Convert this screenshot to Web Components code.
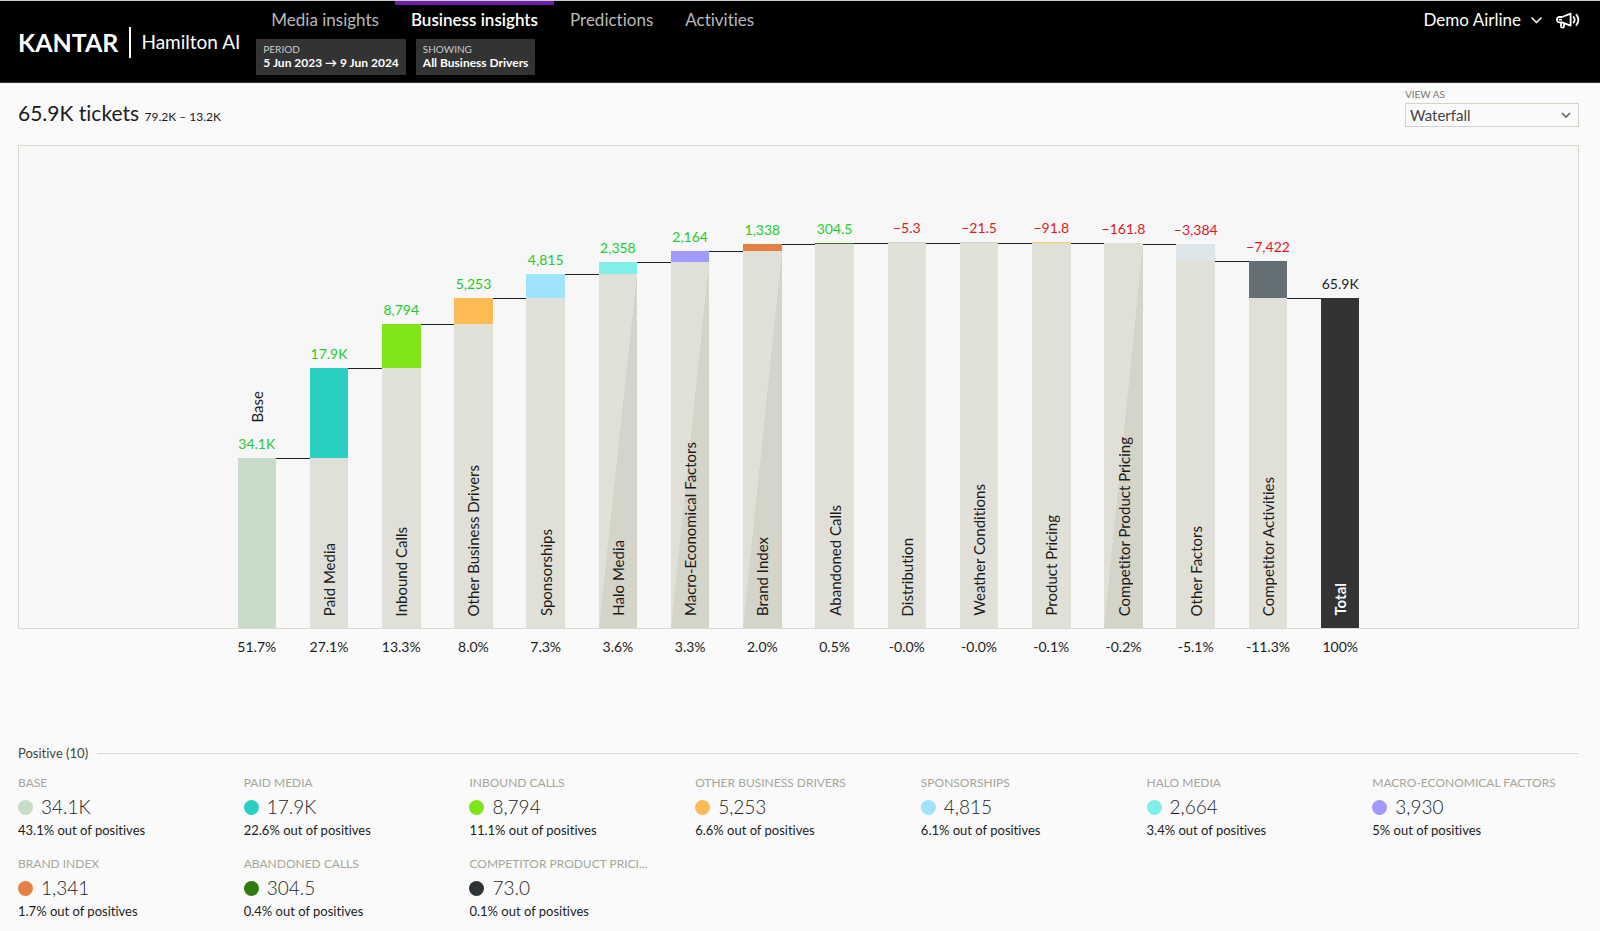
<!DOCTYPE html>
<html lang="en">
<head>
<meta charset="utf-8">
<meta name="viewport" content="width=device-width, initial-scale=1">
<title>Hamilton AI - Business insights</title>
<style>
    body {
        margin: 0;
        background: #fafafa;
        color: #1c1c1c;
        font-family: Lato, "Open Sans", sans-serif;
        font-size: 14px;
        font-variant-ligatures: none;
    }

    main {
        padding: 5px 21px 12px 18px;
    }
</style>
</head>
<body>

<app-header>
    <nav-tab slot="tabs">Media insights</nav-tab>
    <nav-tab slot="tabs" active>Business insights</nav-tab>
    <nav-tab slot="tabs">Predictions</nav-tab>
    <nav-tab slot="tabs">Activities</nav-tab>
    <filter-chip slot="filters" label="PERIOD">5 Jun 2023 → 9 Jun 2024</filter-chip>
    <filter-chip slot="filters" label="SHOWING">All Business Drivers</filter-chip>
    <span slot="account">Demo Airline</span>
</app-header>

<main>
    <chart-toolbar>
        <span slot="title">65.9K tickets</span>
        <span slot="range">79.2K – 13.2K</span>
    </chart-toolbar>
    <waterfall-chart></waterfall-chart>
    <legend-group>Positive (10)</legend-group>
</main>

<template id="APP_HEADER">
    <style>
    :host {
        display: block;
        background: #000;
        color: #fff;
        border-top: 1px solid #c8cdd0;
        border-bottom: 1px solid #333;
    }

    header {
        display: flex;
        padding: 0 20px 7px 18px;
    }

    .brand {
        display: flex;
        align-items: center;
        align-self: center;
        padding-top: 8px;
        color: inherit;
        text-decoration: none;
    }

    .brand b {
        font-size: 25px;
        line-height: 32px;
        font-weight: 700;
    }

    .brand i {
        width: 2px;
        height: 31px;
        margin: 0 10px 0 11px;
        background: #fff;
    }

    .brand span {
        font-size: 19px;
        line-height: 24px;
    }

    .center {
        flex: 1;
        padding-left: 15px;
    }

    nav, .filters {
        display: flex;
    }

    .filters {
        gap: 10px;
        padding-left: 1px;
    }

    .account {
        display: flex;
        align-items: center;
        align-self: flex-start;
        gap: 13px;
        padding-top: 7px;
    }

    button {
        display: flex;
        align-items: center;
        gap: 9px;
        padding: 0;
        border: 0;
        background: none;
        color: inherit;
        font: inherit;
        font-size: 17px;
        line-height: 24px;
        cursor: pointer;
    }

    svg {
        display: block;
        fill: none;
        stroke: #fff;
    }
    </style>
    <header>
        <a class="brand" href="#"><b>KANTAR</b><i></i><span>Hamilton AI</span></a>
        <div class="center">
            <nav><slot name="tabs"></slot></nav>
            <div class="filters"><slot name="filters"></slot></div>
        </div>
        <div class="account">
            <button type="button">
                <slot name="account"></slot>
                <svg width="13" height="8" viewBox="0 0 13 8" stroke-width="1.5"><path d="M1.5 1.5l5 5 5-5"/></svg>
            </button>
            <button type="button" aria-label="Announcements">
                <svg width="24" height="17" viewBox="0 0 24 17" stroke-width="1.8" stroke-linejoin="round" stroke-linecap="round">
                    <path d="M6 5L14.6 1.600v12L6 10.400H3.400A2.400 2.400 0 0 1 1 8V7.400A2.400 2.400 0 0 1 3.400 5zM5 10.600v3.600a1.500 1.500 0 0 0 3 0v-2.800M3.600 7.700h1.600"/>
                    <path d="M17.600 5a4.600 4.600 0 0 1 0 5.600M20.400 2.600a8.600 8.600 0 0 1 0 10.400"/>
                </svg>
            </button>
        </div>
    </header>
</template>

<template id="NAV_TAB">
    <style>
    :host {
        display: block;
        font-size: 17px;
        line-height: 24px;
    }

    a {
        display: block;
        padding: 3px 16px 7px;
        border-top: 4px solid transparent;
        color: #b9b9b9;
        text-decoration: none;
    }

    :host([active]) a {
        border-color: #6d1fa8;
        color: #fff;
        font-weight: 600;
    }
    </style>
    <a href="#"><slot></slot></a>
</template>

<template id="FILTER_CHIP">
    <style>
    :host {
        display: block;
    }

    button {
        display: block;
        padding: 4px 7px;
        border: 0;
        background: #333;
        color: #fff;
        font: inherit;
        font-size: 12px;
        font-weight: 700;
        line-height: 16px;
        text-align: left;
        cursor: pointer;
    }

    small {
        display: block;
        color: #c9c9c9;
        font-size: 10px;
        font-weight: 400;
        line-height: 12px;
    }
    </style>
    <button type="button"><small></small><slot></slot></button>
</template>

<template id="CHART_TOOLBAR">
    <style>
    :host {
        display: flex;
        justify-content: space-between;
        align-items: flex-end;
        padding-bottom: 18px;
    }

    h1 {
        margin: 0;
        font-size: 21px;
        font-weight: 400;
        line-height: 20px;
    }

    small {
        font-size: 12px;
    }

    .view {
        display: grid;
        gap: 3px;
        width: 174px;
    }

    label {
        color: #77776f;
        font-size: 10px;
        line-height: 12px;
    }

    .field {
        display: grid;
        align-items: center;
    }

    select, svg {
        grid-area: 1 / 1;
    }

    select {
        appearance: none;
        height: 24px;
        padding: 0 4px;
        border: 1px solid #d3d3c6;
        border-radius: 0;
        background: #fafafa;
        color: #444;
        font: inherit;
        font-size: 15px;
    }

    svg {
        justify-self: end;
        margin-right: 8px;
        fill: none;
        stroke: #666;
        pointer-events: none;
    }
    </style>
    <h1><slot name="title"></slot> <small><slot name="range"></slot></small></h1>
    <div class="view">
        <label for="view">VIEW AS</label>
        <div class="field">
            <select id="view"><option>Waterfall</option></select>
            <svg width="10" height="7" viewBox="0 0 10 7" stroke-width="1.6"><path d="M1 1l4 4 4-4"/></svg>
        </div>
    </div>
</template>

<template id="WATERFALL_CHART">
    <style>
    :host {
        display: block;
    }

    .plot, .shares {
        display: grid;
        grid-template-columns: repeat(15, minmax(0, 8fr) minmax(0, 7fr)) minmax(0, 8fr);
        padding: 0 14%;
    }

    .plot {
        grid-template-rows: 482px;
        border: 1px solid #d9d9cd;
        background: #f7f7f7;
    }

    .bar {
        display: flex;
        flex-direction: column;
        align-items: center;
        justify-content: flex-end;
        white-space: nowrap;
    }

    .value {
        padding-bottom: 5px;
        font-size: 14px;
        line-height: 18px;
    }

    .up { color: #1fcb2c; }
    .down { color: #e0191f; }

    .part, .stand {
        flex: none;
        align-self: stretch;
    }

    .part {
        min-height: 1px;
    }

    .stand {
        display: flex;
        align-items: flex-end;
        justify-content: center;
        background: #e0e0d8;
    }

    .halo .stand {
        background: linear-gradient(to bottom right, #e0e0d8 50%, #d4d4c8 50%);
    }

    .name {
        margin-bottom: 12px;
        writing-mode: vertical-rl;
        transform: rotate(180deg);
        font-size: 15px;
        line-height: 22px;
    }

    .total .name {
        color: #fff;
        font-weight: 700;
    }

    .link {
        align-self: end;
        box-sizing: border-box;
        border-top: 1px solid #222;
    }

    .shares {
        padding: 8px calc(14% + 1px) 0;
        line-height: 20px;
    }

    .shares span {
        grid-column-end: span 2;
        display: flex;
        justify-content: center;
        width: 53.3333%;
        white-space: nowrap;
    }

    .shares span:last-child {
        grid-column-end: span 1;
        width: auto;
    }
    </style>
    <div class="plot"></div>
    <div class="shares"></div>
</template>

<template id="LEGEND_GROUP">
    <style>
    :host {
        display: block;
        margin-top: 88px;
    }

    h2 {
        display: flex;
        align-items: center;
        gap: 9px;
        margin: 0 0 14px;
        color: #444;
        font-size: 13px;
        font-weight: 400;
        line-height: 16px;
    }

    h2::after {
        content: "";
        flex: 1;
        border-top: 1px solid #dcdcd2;
    }

    div {
        display: grid;
        grid-template-columns: repeat(7, minmax(0, 1fr));
        gap: 18px 19px;
    }
    </style>
    <h2><slot></slot></h2>
    <div></div>
</template>

<template id="LEGEND_ITEM">
    <style>
    :host {
        display: grid;
        gap: 3px;
        font-size: 13px;
        line-height: 16px;
        white-space: nowrap;
    }

    .name {
        padding-bottom: 1px;
        color: #a6a69b;
        font-size: 12px;
    }

    .value {
        display: flex;
        align-items: center;
        gap: 8px;
        font-size: 19px;
        font-weight: 300;
        line-height: 24px;
    }

    .value i {
        width: 15px;
        height: 15px;
        border-radius: 50%;
        background: var(--dot);
    }
    </style>
    <span class="name"></span>
    <span class="value"><i></i><span></span></span>
    <span class="share"></span>
</template>

<script>
// name, label, change, share, colour, has halo
const BARS = [
    ["Base", "34.1K", 34100, "51.7%", "#c9dcc9"],
    ["Paid Media", "17.9K", 17900, "27.1%", "#28d0c1"],
    ["Inbound Calls", "8,794", 8794, "13.3%", "#7fe51a"],
    ["Other Business Drivers", "5,253", 5253, "8.0%", "#fdba55"],
    ["Sponsorships", "4,815", 4815, "7.3%", "#9fe3ff"],
    ["Halo Media", "2,358", 2358, "3.6%", "#80eeea", true],
    ["Macro-Economical Factors", "2,164", 2164, "3.3%", "#a099ff", true],
    ["Brand Index", "1,338", 1338, "2.0%", "#e58044", true],
    ["Abandoned Calls", "304.5", 304.5, "0.5%", "#2f7a12"],
    ["Distribution", "−5.3", -5.3, "-0.0%", "#d3d3ca"],
    ["Weather Conditions", "−21.5", -21.5, "-0.0%", "#d3d3ca"],
    ["Product Pricing", "−91.8", -91.8, "-0.1%", "#fdc860"],
    ["Competitor Product Pricing", "−161.8", -161.8, "-0.2%", "#e0e0d8", true],
    ["Other Factors", "−3,384", -3384, "-5.1%", "#dfe6ea"],
    ["Competitor Activities", "−7,422", -7422, "-11.3%", "#646f73"],
]

const LEGEND = [
    ["BASE", "34.1K", "43.1%", "#c9dcc9"],
    ["PAID MEDIA", "17.9K", "22.6%", "#28d0c1"],
    ["INBOUND CALLS", "8,794", "11.1%", "#7fe51a"],
    ["OTHER BUSINESS DRIVERS", "5,253", "6.6%", "#fdba55"],
    ["SPONSORSHIPS", "4,815", "6.1%", "#9fe3ff"],
    ["HALO MEDIA", "2,664", "3.4%", "#80eeea"],
    ["MACRO-ECONOMICAL FACTORS", "3,930", "5%", "#a099ff"],
    ["BRAND INDEX", "1,341", "1.7%", "#e58044"],
    ["ABANDONED CALLS", "304.5", "0.4%", "#2f7a12"],
    ["COMPETITOR PRODUCT PRICI...", "73.0", "0.1%", "#2e3436"],
]

// value at the top edge of the plot
const SCALE_MAX = 96400

class TemplateElement extends HTMLElement {
    constructor(id) {
        super()
        const template = document.getElementById(id).content
        this.attachShadow({ mode: "open" }).append(template.cloneNode(true))
    }
}

customElements.define('app-header', class extends TemplateElement {
    constructor() { super("APP_HEADER") }
})

customElements.define('nav-tab', class extends TemplateElement {
    constructor() { super("NAV_TAB") }
})

customElements.define('filter-chip', class extends TemplateElement {
    constructor() { super("FILTER_CHIP") }

    connectedCallback() {
        this.shadowRoot.querySelector("small").textContent = this.getAttribute("label")
    }
})

customElements.define('chart-toolbar', class extends TemplateElement {
    constructor() { super("CHART_TOOLBAR") }
})

customElements.define('waterfall-chart', class extends TemplateElement {
    constructor() { super("WATERFALL_CHART") }

    connectedCallback() {
        const percent = n => (n / SCALE_MAX * 100) + "%"
        let sum = 0
        let plot = ""
        let shares = ""

        BARS.forEach(([name, label, change, share, color, halo], i) => {
            const base = Math.min(sum, sum + change)
            const sign = change < 0 ? "down" : "up"
            sum += change

            // the first bar stands on the axis, so its name goes above the value
            plot += `<div class="bar ${halo ? "halo" : ""}">
                ${i ? "" : `<span class="name">${name}</span>`}
                <span class="value ${sign}">${label}</span>
                <div class="part" style="height:${percent(Math.abs(change))};background:${color}"></div>
                ${i ? `<div class="stand" style="height:${percent(base)}"><span class="name">${name}</span></div>` : ""}
            </div>
            <div class="link" style="height:${percent(sum)}"></div>`
            shares += `<span>${share}</span>`
        })

        plot += `<div class="bar total">
            <span class="value">65.9K</span>
            <div class="stand" style="height:${percent(sum)};background:#333"><span class="name">Total</span></div>
        </div>`
        shares += `<span>100%</span>`

        this.shadowRoot.querySelector(".plot").innerHTML = plot
        this.shadowRoot.querySelector(".shares").innerHTML = shares
    }
})

customElements.define('legend-item', class extends TemplateElement {
    constructor() { super("LEGEND_ITEM") }

    set data([name, value, share, color]) {
        this.shadowRoot.querySelector(".name").textContent = name
        this.shadowRoot.querySelector(".value span").textContent = value
        this.shadowRoot.querySelector(".share").textContent = share + " out of positives"
        this.style.setProperty("--dot", color)
    }
})

customElements.define('legend-group', class extends TemplateElement {
    constructor() { super("LEGEND_GROUP") }

    connectedCallback() {
        const grid = this.shadowRoot.querySelector("div")
        LEGEND.forEach(row => {
            const item = document.createElement("legend-item")
            item.data = row
            grid.append(item)
        })
    }
})
</script>
</body>
</html>
